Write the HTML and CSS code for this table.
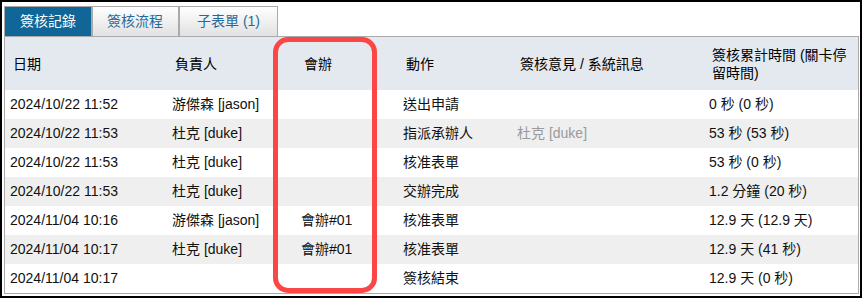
FILE: index.html
```html
<!DOCTYPE html>
<html lang="zh-Hant">
<head>
<meta charset="utf-8">
<title>簽核記錄</title>
<link rel="stylesheet" href="styles.css">
</head>
<body>
<div class="frame">
  <div class="tabs">
    <div class="tab active">簽核記錄</div>
    <div class="tab">簽核流程</div>
    <div class="tab">子表單 (1)</div>
  </div>
  <div class="panel">
    <table class="log">
      <colgroup>
        <col class="c1"><col class="c2"><col class="c3"><col class="c4"><col class="c5"><col class="c6">
      </colgroup>
      <thead>
        <tr>
          <th>日期</th>
          <th>負責人</th>
          <th>會辦</th>
          <th>動作</th>
          <th>簽核意見 / 系統訊息</th>
          <th>簽核累計時間 (關卡停留時間)</th>
        </tr>
      </thead>
      <tbody>
        <tr><td>2024/10/22 11:52</td><td>游傑森 [jason]</td><td></td><td>送出申請</td><td></td><td>0 秒 (0 秒)</td></tr>
        <tr><td>2024/10/22 11:53</td><td>杜克 [duke]</td><td></td><td>指派承辦人</td><td class="muted">杜克 [duke]</td><td>53 秒 (53 秒)</td></tr>
        <tr><td>2024/10/22 11:53</td><td>杜克 [duke]</td><td></td><td>核准表單</td><td></td><td>53 秒 (0 秒)</td></tr>
        <tr><td>2024/10/22 11:53</td><td>杜克 [duke]</td><td></td><td>交辦完成</td><td></td><td>1.2 分鐘 (20 秒)</td></tr>
        <tr><td>2024/11/04 10:16</td><td>游傑森 [jason]</td><td>會辦#01</td><td>核准表單</td><td></td><td>12.9 天 (12.9 天)</td></tr>
        <tr><td>2024/11/04 10:17</td><td>杜克 [duke]</td><td>會辦#01</td><td>核准表單</td><td></td><td>12.9 天 (41 秒)</td></tr>
        <tr><td>2024/11/04 10:17</td><td></td><td></td><td>簽核結束</td><td></td><td>12.9 天 (0 秒)</td></tr>
      </tbody>
    </table>
    <div class="highlight"></div>
  </div>
</div>
</body>
</html>
```

FILE: styles.css
```css
html, body {
  margin: 0;
  padding: 0;
  background: #fff;
}

body {
  font-family: "Liberation Sans", Arial, "Noto Sans CJK TC", sans-serif;
  font-size: 14px;
  color: #111;
}

.frame {
  box-sizing: border-box;
  width: 862px;
  height: 298px;
  border: 2px solid #000;
  padding: 4px 1px 1px 2px;
  display: flex;
  flex-direction: column;
}

.tabs {
  display: flex;
  height: 30px;
}

.tab {
  box-sizing: border-box;
  height: 30px;
  line-height: 29px;
  padding: 0 15px;
  border: 1px solid #aaa;
  border-bottom: none;
  background: linear-gradient(#ffffff, #e1e1e1);
  color: #236b9c;
  white-space: nowrap;
}

.tab.active {
  background: #0f6697;
  color: #fff;
}

.tab:nth-child(2) {
  padding: 0 15px 0 14px;
}

.tab:nth-child(3) {
  padding: 0 17px;
}

.panel {
  position: relative;
  border: 1px solid #aaa;
  width: 855px;
  box-sizing: border-box;
}

.log {
  width: 853px;
  border-collapse: collapse;
  table-layout: fixed;
}

.c1 { width: 162px; }
.c2 { width: 129px; }
.c3 { width: 102px; }
.c4 { width: 114px; }
.c5 { width: 192px; }
.c6 { width: 154px; }

.log th {
  background: #e4e9f0;
  font-weight: normal;
  text-align: left;
  vertical-align: middle;
  color: #000;
  line-height: 18px;
  height: 53px;
  padding: 0 8px 0 8px;
  box-sizing: border-box;
}

.log td {
  line-height: 17px;
  height: 29px;
  padding: 0 5px;
  box-sizing: border-box;
  white-space: nowrap;
  vertical-align: middle;
}

.log tbody tr:nth-child(even) td {
  background: #efefef;
}

.log td.muted {
  color: #9a9a9a;
}

.highlight {
  position: absolute;
  left: 268px;
  top: 0;
  width: 104px;
  height: 256px;
  box-sizing: border-box;
  border: 5px solid #fb4646;
  border-radius: 15px;
  pointer-events: none;
}
```
